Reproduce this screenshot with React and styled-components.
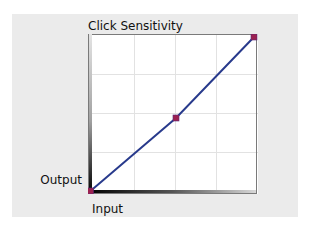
import React from 'react'
import styled, { createGlobalStyle } from 'styled-components'

const GlobalStyle = createGlobalStyle`
  body {
    margin: 0;
    background: #ffffff;
    font-family: Verdana, "DejaVu Sans", sans-serif;
  }
`

const Panel = styled.div`
  margin: 14px 0 0 12px;
  width: 286px;
  height: 203px;
  background: #ebebeb;
  display: grid;
  grid-template-columns: 76px 170px;
  grid-template-rows: 20px 160px 23px;
  color: #111;
  font-size: 12px;
`

const Title = styled.div`
  grid-column: 2;
  align-self: end;
  line-height: 14px;
  padding-bottom: 1px;
`

const OutputLabel = styled.div`
  grid-column: 1;
  grid-row: 2;
  align-self: end;
  justify-self: end;
  padding: 0 6px 7px 0;
  line-height: 14px;
`

const InputLabel = styled.div`
  grid-column: 2;
  grid-row: 3;
  padding: 8px 0 0 4px;
  line-height: 14px;
`

const ChartBox = styled.div`
  grid-column: 2;
  grid-row: 2;
  width: 170px;
  height: 160px;
  background: #ffffff;
`

const W = 170
const H = 160
const points = [
  [2.5, 157],
  [88, 84],
  [166, 3],
]

const Curve = () => (
  <svg width={W} height={H} viewBox={`0 0 ${W} ${H}`}>
    <defs>
      <linearGradient id="lg" x1="0" y1="0" x2="0" y2="1">
        <stop offset="0" stopColor="#e4e4e4" />
        <stop offset="0.55" stopColor="#a0a0a0" />
        <stop offset="1" stopColor="#000" />
      </linearGradient>
      <linearGradient id="bg" x1="0" y1="0" x2="1" y2="0">
        <stop offset="0" stopColor="#000" />
        <stop offset="0.5" stopColor="#555" />
        <stop offset="1" stopColor="#d8d8d8" />
      </linearGradient>
    </defs>
    {[46, 87, 128].map(x => (
      <line key={'v' + x} x1={x + 0.5} y1="0" x2={x + 0.5} y2={H} stroke="#e2e2e2" />
    ))}
    {[40, 79, 118].map(y => (
      <line key={'h' + y} x1="0" y1={y + 0.5} x2={W} y2={y + 0.5} stroke="#e2e2e2" />
    ))}
    <rect x="0.5" y="0.5" width={W - 2} height={H - 1} fill="none" stroke="#7a7a7a" />
    <rect x="1" y="0" width="3" height={H - 1} fill="url(#lg)" />
    <rect x="1" y={H - 4} width={W - 3} height="3" fill="url(#bg)" />
    <polyline
      points={points.map(p => p.join(',')).join(' ')}
      fill="none"
      stroke="#283a8c"
      strokeWidth="2"
    />
    {points.map(([x, y], i) => (
      <rect key={i} x={x - 3} y={y - 3} width="6" height="6" fill="#9c2150" stroke="#5a2a78" strokeWidth="0.6" />
    ))}
  </svg>
)

export default function App() {
  return (
    <>
      <GlobalStyle />
      <Panel>
        <Title>Click Sensitivity</Title>
        <OutputLabel>Output</OutputLabel>
        <ChartBox>
          <Curve />
        </ChartBox>
        <InputLabel>Input</InputLabel>
      </Panel>
    </>
  )
}
